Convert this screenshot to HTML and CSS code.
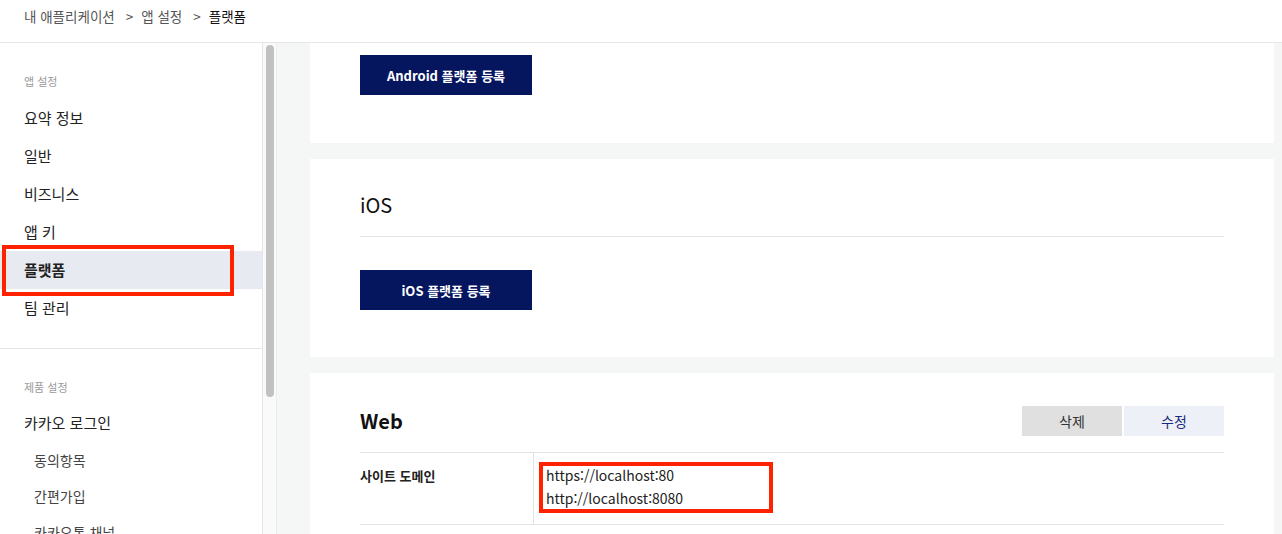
FILE: index.html
```html
<!DOCTYPE html>
<html lang="ko">
<head>
<meta charset="utf-8">
<title>플랫폼</title>
<link rel="stylesheet" href="styles.css">
</head>
<body>
<header class="header">
  <nav class="crumbs">
    <span class="crumb">내 애플리케이션</span>
    <span class="sep">&gt;</span>
    <span class="crumb">앱 설정</span>
    <span class="sep">&gt;</span>
    <span class="crumb current">플랫폼</span>
  </nav>
</header>
<div class="layout">
  <aside class="sidebar">
    <div class="group">
      <div class="group-label">앱 설정</div>
      <a class="item">요약 정보</a>
      <a class="item">일반</a>
      <a class="item">비즈니스</a>
      <a class="item">앱 키</a>
      <a class="item active">플랫폼<span class="mark mark-side"></span></a>
      <a class="item">팀 관리</a>
    </div>
    <div class="group second">
      <div class="group-label">제품 설정</div>
      <a class="item">카카오 로그인</a>
      <a class="sub">동의항목</a>
      <a class="sub">간편가입</a>
      <a class="sub">카카오톡 채널</a>
    </div>
  </aside>
  <div class="scrolltrack"><div class="thumb"></div></div>
  <main class="main">
    <section class="card card-first">
      <button class="btn-primary">Android 플랫폼 등록</button>
    </section>
    <section class="card">
      <h2 class="card-title">iOS</h2>
      <button class="btn-primary btn-gap">iOS 플랫폼 등록</button>
    </section>
    <section class="card card-web">
      <div class="web-head">
        <h2 class="web-title">Web</h2>
        <div class="actions">
          <button class="btn-del">삭제</button>
          <button class="btn-edit">수정</button>
        </div>
      </div>
      <div class="table">
        <div class="row">
          <div class="th">사이트 도메인</div>
          <div class="td">
            <div>https://localhost:80</div>
            <div>http://localhost:8080</div>
            <span class="mark mark-web"></span>
          </div>
        </div>
      </div>
    </section>
  </main>
</div>
</body>
</html>
```
FILE: styles.css
```css
* { box-sizing: border-box; }
html, body { margin: 0; padding: 0; }
body {
  font-family: "Noto Sans CJK KR", "Noto Sans", sans-serif;
  color: #222;
  background: #fff;
  height: 534px;
  overflow: hidden;
}
.header {
  height: 43px;
  border-bottom: 1px solid #e6e6e6;
  padding: 5px 0 0 24px;
}
.crumbs {
  display: flex;
  align-items: center;
  font-size: 13.5px;
  line-height: 22px;
  color: #555;
}
.sep { margin: 0 8px 0 11px; color: #555; }
.crumb.current { color: #111; font-weight: 400; }

.layout {
  display: flex;
  height: 491px;
  overflow: hidden;
}
.sidebar {
  width: 262px;
  flex: none;
  background: #fff;
}
.group { padding: 30px 0 21px; border-bottom: 1px solid #e5e5e5; }
.group.second { border-bottom: none; padding-top: 30px; }
.group-label {
  padding-left: 24px;
  font-size: 11px;
  line-height: 16px;
  color: #999;
  margin-bottom: 10px;
}
.group.second .group-label { margin-bottom: 9px; }
.item {
  display: block;
  position: relative;
  height: 38px;
  line-height: 38px;
  padding-left: 24px;
  font-size: 15px;
  color: #222;
}
.item.active { background: #e7eaf1; font-weight: 700; }
.sub {
  display: block;
  height: 36px;
  line-height: 36px;
  padding-left: 34px;
  font-size: 14px;
  color: #444;
}
.mark {
  position: absolute;
  border: 4px solid #ff2200;
  pointer-events: none;
}
.mark-side { left: 2px; top: -6px; width: 232px; height: 51px; }

.scrolltrack {
  width: 15px;
  flex: none;
  background: #fafafa;
  border-left: 1px solid #e6e6e6;
  border-right: 1px solid #ececec;
  padding: 2px 2px 0 3px;
}
.thumb {
  width: 8px;
  height: 352px;
  border-radius: 4px;
  background: #c1c1c1;
}

.main {
  flex: 1;
  background: #f5f6f6;
  padding: 0 8px 0 33px;
  display: flex;
  flex-direction: column;
  gap: 16px;
}
.card {
  background: #fff;
  padding: 30px 50px 47px;
  flex: none;
}
.card-first { padding-top: 12px; padding-bottom: 48px; }
.card-title {
  margin: 0;
  font-size: 20px;
  line-height: 32px;
  font-weight: 400;
  color: #111;
  padding-bottom: 15px;
  border-bottom: 1px solid #e3e3e3;
}
.btn-primary {
  display: block;
  width: 172px;
  height: 40px;
  border: none;
  background: #05165f;
  color: #fff;
  font-family: inherit;
  font-size: 13px;
  font-weight: 700;
  padding: 0;
}
.btn-gap { margin-top: 33px; }

.card-web { padding-top: 33px; padding-bottom: 40px; }
.web-head {
  display: flex;
  align-items: center;
  justify-content: space-between;
  height: 30px;
  margin-bottom: 16px;
}
.web-title {
  margin: 0;
  font-size: 20px;
  font-weight: 700;
  line-height: 30px;
  color: #111;
}
.actions { display: flex; gap: 2px; }
.btn-del, .btn-edit {
  width: 100px;
  height: 30px;
  border: none;
  font-family: inherit;
  font-size: 14px;
  padding: 0;
}
.btn-del { background: #e0e0e0; color: #333; }
.btn-edit { background: #eef0f8; color: #1b2a7a; }
.table { border-top: 1px solid #e3e3e3; }
.row { display: flex; border-bottom: 1px solid #e3e3e3; }
.th {
  width: 174px;
  flex: none;
  border-right: 1px solid #e3e3e3;
  font-size: 13px;
  font-weight: 700;
  line-height: 23px;
  padding: 11px 0 14px;
  color: #222;
}
.td {
  position: relative;
  flex: 1;
  padding: 11px 0 14px 12px;
  font-size: 14px;
  line-height: 23px;
  color: #222;
}
.mark-web { left: 5px; top: 9px; width: 234px; height: 51px; }
```
